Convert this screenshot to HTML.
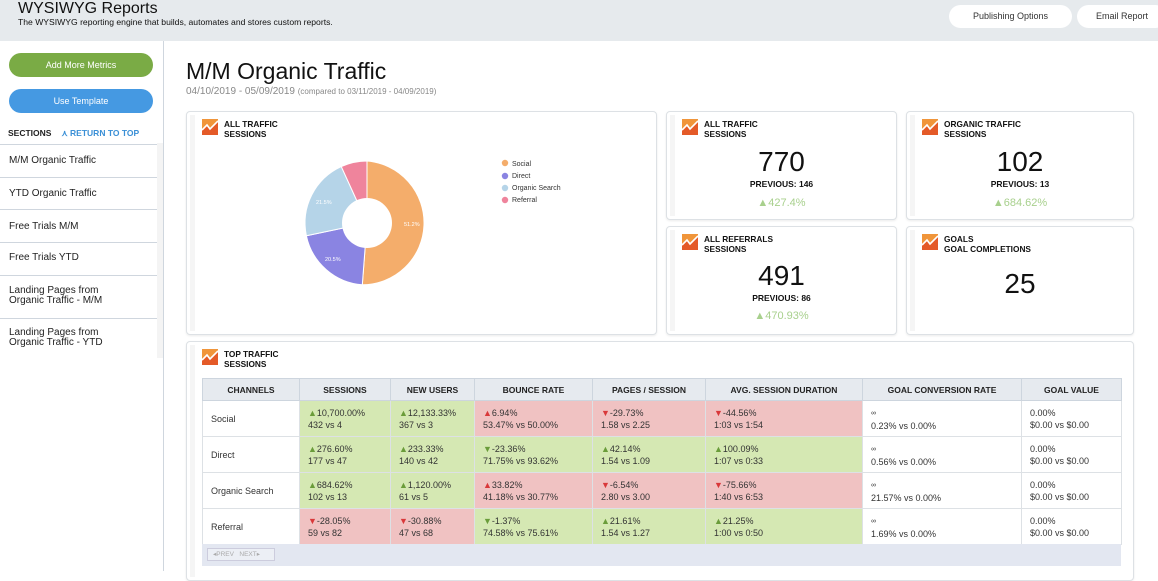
<!DOCTYPE html>
<html><head><meta charset="utf-8"><style>
*{box-sizing:border-box;margin:0;padding:0}
body{width:1158px;height:571px;overflow:hidden;font-family:"Liberation Sans",sans-serif;background:#fff;position:relative;color:#222}
.hdr{position:absolute;left:0;top:0;width:1158px;height:41px;background:#e6eaed}
.hdr h1{position:absolute;left:18px;top:0;font-size:16px;font-weight:normal;color:#111}
.hdr p{position:absolute;left:18px;top:17px;font-size:8.6px;color:#111}
.pill{position:absolute;top:5px;height:23px;background:#fff;border-radius:12px;font-size:9px;color:#333;text-align:center;line-height:23px}
.side{position:absolute;left:0;top:41px;width:164px;height:530px;border-right:1px solid #cfd6de;background:#fff}
.btn{position:absolute;left:9px;width:144px;height:24px;border-radius:12px;color:#fff;font-size:9px;text-align:center;line-height:24px}
.sec{position:absolute;left:8px;top:87px;font-size:8.5px;font-weight:bold}
.sec span{color:#3a8fd6;margin-left:10px}
.item{position:absolute;left:0;width:157px;border-top:1px solid #cfd6de;font-size:10px;padding-left:9px;color:#222}
.dots{position:absolute;left:157px;top:102px;width:6px;height:215px;background-image:radial-gradient(#d4d4d4 0.5px,transparent 0.6px);background-size:2px 2px}
.title{position:absolute;left:186px;top:58px;font-size:23px;color:#111}
.date{position:absolute;left:186px;top:86px;font-size:10px;color:#888}
.date small{font-size:8px}
.card{position:absolute;border:1px solid #dde1e5;border-radius:4px;background:#fff;box-shadow:0 1px 2px rgba(0,0,0,.08)}
.card .dt{position:absolute;left:3px;top:3px;bottom:3px;width:5px;background-image:radial-gradient(#d8d8d8 0.5px,transparent 0.6px);background-size:2px 2px}
.ic{position:absolute;left:15px;top:7px;width:16px;height:16px}
.ct{position:absolute;left:37px;top:7px;font-size:8.3px;font-weight:bold;line-height:10px;color:#111}
.big{position:absolute;left:0;right:0;text-align:center;font-size:28px;color:#111}
.prev{position:absolute;left:0;right:0;text-align:center;font-size:8.5px;font-weight:bold;color:#111}
.pct{position:absolute;left:0;right:0;text-align:center;font-size:11px;color:#a8d08d}
table{position:absolute;left:202px;top:378px;border-collapse:collapse;font-size:9px;color:#333}
th{background:#e6eaef;height:22px;font-size:8.5px;font-weight:bold;color:#222;border:1px solid #cdd5de}
td{height:36px;border:1px solid #dde1e5;padding-left:8px;line-height:12px;vertical-align:middle}
.g{background:#d5e8b3}.r{background:#f0c2c2}
.u{color:#6a9c3a}.d{color:#d9383a}
.inf{font-size:7px}
.foot{position:absolute;left:202px;top:544px;width:919px;height:22px;background:#e3e7f1}
.pg{position:absolute;left:5px;top:4px;height:13px;border:1px solid #ccd;font-size:6.5px;color:#aaa;line-height:11px;background:#eceff5}
</style></head><body>
<div class="hdr"><h1>WYSIWYG Reports</h1><p>The WYSIWYG reporting engine that builds, automates and stores custom reports.</p>
<div class="pill" style="left:949px;width:123px">Publishing Options</div>
<div class="pill" style="left:1077px;width:90px">Email Report</div></div>
<div class="side">
<div class="btn" style="top:12px;background:#7aab45">Add More Metrics</div>
<div class="btn" style="top:48px;background:#4599e2">Use Template</div>
<div class="sec">SECTIONS<span>⋏ RETURN TO TOP</span></div>
<div class="item" style="top:103px;height:33px;padding-top:10px">M/M Organic Traffic</div>
<div class="item" style="top:136px;height:32px;padding-top:10px">YTD Organic Traffic</div>
<div class="item" style="top:168px;height:33px;padding-top:11px">Free Trials M/M</div>
<div class="item" style="top:201px;height:33px;padding-top:9px">Free Trials YTD</div>
<div class="item" style="top:234px;height:43px;padding-top:10px;line-height:10px">Landing Pages from<br>Organic Traffic - M/M</div>
<div class="item" style="top:277px;height:43px;padding-top:9px;line-height:10px">Landing Pages from<br>Organic Traffic - YTD</div>
<div class="dots"></div>
</div>
<div class="title">M/M Organic Traffic</div>
<div class="date">04/10/2019 - 05/09/2019 <small>(compared to 03/11/2019 - 04/09/2019)</small></div>

<svg width="0" height="0" style="position:absolute"><defs><symbol id="ic" viewBox="0 0 16 16"><rect width="16" height="16" fill="#f0953a"/><path d="M0 16V11L5 6L8 10L16 2V16Z" fill="#e45a28"/><path d="M0 11L5 6L8 10L16 2" stroke="#fff" stroke-width="1.6" fill="none"/></symbol></defs></svg>

<div class="card" style="left:186px;top:111px;width:471px;height:224px"><div class="dt"></div>
<svg class="ic"><use href="#ic"/></svg><div class="ct">ALL TRAFFIC<br>SESSIONS</div>
<svg style="position:absolute;left:0;top:0" width="471" height="224">
<g transform="translate(-186,-111)">
<path d="M366 222L366 160A62 62 0 0 1 361.3 283.8Z" fill="#f4ad6b" stroke="#fff" stroke-width="1"/>
<path d="M366 222L361.3 283.8A62 62 0 0 1 305.4 234.8Z" fill="#8a84e2" stroke="#fff" stroke-width="1"/>
<path d="M366 222L305.4 234.8A62 62 0 0 1 340.3 165.6Z" fill="#b5d4e8" stroke="#fff" stroke-width="1"/>
<path d="M366 222L340.3 165.6A62 62 0 0 1 366 160Z" fill="#ef849c" stroke="#fff" stroke-width="1"/>
<circle cx="366" cy="222" r="25" fill="#fff"/>
<g font-size="5.5" fill="#fff" font-family="Liberation Sans"><text x="403" y="225">51.2%</text><text x="324" y="260">20.5%</text><text x="315" y="203">21.5%</text></g>
<g font-size="7" fill="#333" font-family="Liberation Sans">
<circle cx="504" cy="162" r="3.2" fill="#f4ad6b"/><text x="511" y="165">Social</text>
<circle cx="504" cy="175" r="3.2" fill="#8a84e2"/><text x="511" y="177">Direct</text>
<circle cx="504" cy="187" r="3.2" fill="#b5d4e8"/><text x="511" y="189">Organic Search</text>
<circle cx="504" cy="199" r="3.2" fill="#ef849c"/><text x="511" y="201">Referral</text></g></g></svg>
</div>

<div class="card" style="left:666px;top:111px;width:231px;height:109px"><div class="dt"></div>
<svg class="ic"><use href="#ic"/></svg><div class="ct">ALL TRAFFIC<br>SESSIONS</div>
<div class="big" style="top:34px">770</div><div class="prev" style="top:67px">PREVIOUS: 146</div><div class="pct" style="top:85px">▲427.4%</div></div>
<div class="card" style="left:906px;top:111px;width:228px;height:109px"><div class="dt"></div>
<svg class="ic"><use href="#ic"/></svg><div class="ct">ORGANIC TRAFFIC<br>SESSIONS</div>
<div class="big" style="top:34px">102</div><div class="prev" style="top:67px">PREVIOUS: 13</div><div class="pct" style="top:85px">▲684.62%</div></div>
<div class="card" style="left:666px;top:226px;width:231px;height:109px"><div class="dt"></div>
<svg class="ic"><use href="#ic"/></svg><div class="ct">ALL REFERRALS<br>SESSIONS</div>
<div class="big" style="top:33px">491</div><div class="prev" style="top:66px">PREVIOUS: 86</div><div class="pct" style="top:83px">▲470.93%</div></div>
<div class="card" style="left:906px;top:226px;width:228px;height:109px"><div class="dt"></div>
<svg class="ic"><use href="#ic"/></svg><div class="ct">GOALS<br>GOAL COMPLETIONS</div>
<div class="big" style="top:41px">25</div></div>

<div class="card" style="left:186px;top:341px;width:948px;height:240px"><div class="dt"></div>
<svg class="ic"><use href="#ic"/></svg><div class="ct">TOP TRAFFIC<br>SESSIONS</div></div>

<table>
<tr><th style="width:97px">CHANNELS</th><th style="width:91px">SESSIONS</th><th style="width:84px">NEW USERS</th><th style="width:118px">BOUNCE RATE</th><th style="width:113px">PAGES / SESSION</th><th style="width:157px">AVG. SESSION DURATION</th><th style="width:159px">GOAL CONVERSION RATE</th><th style="width:100px">GOAL VALUE</th></tr>
<tr><td>Social</td><td class="g"><span class="u">▲</span>10,700.00%<br>432 vs 4</td><td class="g"><span class="u">▲</span>12,133.33%<br>367 vs 3</td><td class="r"><span class="d">▲</span>6.94%<br>53.47% vs 50.00%</td><td class="r"><span class="d">▼</span>-29.73%<br>1.58 vs 2.25</td><td class="r"><span class="d">▼</span>-44.56%<br>1:03 vs 1:54</td><td><span class="inf">∞</span><br>0.23% vs 0.00%</td><td>0.00%<br>$0.00 vs $0.00</td></tr>
<tr><td>Direct</td><td class="g"><span class="u">▲</span>276.60%<br>177 vs 47</td><td class="g"><span class="u">▲</span>233.33%<br>140 vs 42</td><td class="g"><span class="u">▼</span>-23.36%<br>71.75% vs 93.62%</td><td class="g"><span class="u">▲</span>42.14%<br>1.54 vs 1.09</td><td class="g"><span class="u">▲</span>100.09%<br>1:07 vs 0:33</td><td><span class="inf">∞</span><br>0.56% vs 0.00%</td><td>0.00%<br>$0.00 vs $0.00</td></tr>
<tr><td>Organic Search</td><td class="g"><span class="u">▲</span>684.62%<br>102 vs 13</td><td class="g"><span class="u">▲</span>1,120.00%<br>61 vs 5</td><td class="r"><span class="d">▲</span>33.82%<br>41.18% vs 30.77%</td><td class="r"><span class="d">▼</span>-6.54%<br>2.80 vs 3.00</td><td class="r"><span class="d">▼</span>-75.66%<br>1:40 vs 6:53</td><td><span class="inf">∞</span><br>21.57% vs 0.00%</td><td>0.00%<br>$0.00 vs $0.00</td></tr>
<tr><td>Referral</td><td class="r"><span class="d">▼</span>-28.05%<br>59 vs 82</td><td class="r"><span class="d">▼</span>-30.88%<br>47 vs 68</td><td class="g"><span class="u">▼</span>-1.37%<br>74.58% vs 75.61%</td><td class="g"><span class="u">▲</span>21.61%<br>1.54 vs 1.27</td><td class="g"><span class="u">▲</span>21.25%<br>1:00 vs 0:50</td><td><span class="inf">∞</span><br>1.69% vs 0.00%</td><td>0.00%<br>$0.00 vs $0.00</td></tr>
</table>
<div class="foot"><div class="pg" style="width:68px;padding-left:5px">◂PREV &nbsp;&nbsp;NEXT▸</div></div>
</body></html>
